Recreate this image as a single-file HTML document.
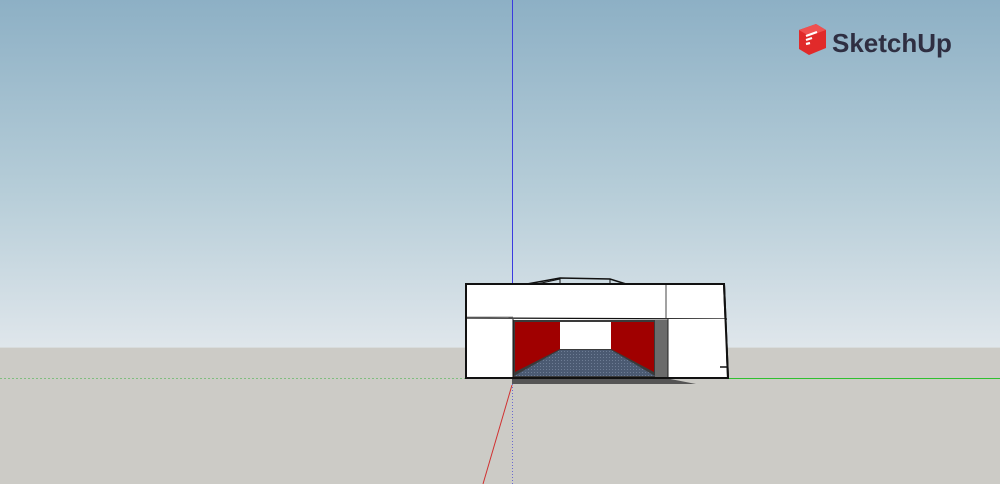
<!DOCTYPE html>
<html><head><meta charset="utf-8"><style>
html,body{margin:0;padding:0;width:1000px;height:484px;overflow:hidden}
</style></head><body>
<svg width="1000" height="484" viewBox="0 0 1000 484" xmlns="http://www.w3.org/2000/svg">
<defs>
<linearGradient id="sky" x1="0" y1="0" x2="0" y2="1">
<stop offset="0" stop-color="#8db0c5"/>
<stop offset="0.55" stop-color="#b6cdd8"/>
<stop offset="1" stop-color="#dfe6eb"/>
</linearGradient>
<pattern id="dots" width="3" height="3" patternUnits="userSpaceOnUse">
<rect width="3" height="3" fill="#4b5a72"/><rect width="1" height="1" fill="#6d7c94"/>
</pattern>
</defs>
<rect x="0" y="0" width="1000" height="347" fill="url(#sky)"/>
<rect x="0" y="347" width="1000" height="137" fill="#cccbc6"/>
<line x1="0" y1="347.5" x2="1000" y2="347.5" stroke="#d8dcdc" stroke-width="1"/>
<line x1="512.5" y1="0" x2="512.5" y2="284" stroke="#3a3ae0" stroke-width="1"/>
<line x1="512.5" y1="384" x2="512.5" y2="484" stroke="#6a6ad0" stroke-width="1" stroke-dasharray="1,2"/>
<line x1="0" y1="378.5" x2="466" y2="378.5" stroke="#7fbf7f" stroke-width="1" stroke-dasharray="2,2"/>
<line x1="728" y1="378.5" x2="1000" y2="378.5" stroke="#2fc02f" stroke-width="1"/>
<line x1="512" y1="385" x2="483" y2="484" stroke="#d03030" stroke-width="1"/>
<polygon points="512,377 660,377 696,384 512,384" fill="#555"/>
<polyline points="527,284 560,278 610,279 626,284" fill="none" stroke="#111" stroke-width="1.5"/>
<line x1="560" y1="278" x2="560" y2="284" stroke="#111"/>
<line x1="610" y1="279" x2="610" y2="284" stroke="#111"/>
<line x1="537" y1="284" x2="560" y2="279" stroke="#111"/>
<polygon points="466,284 724,284 728,378 466,378" fill="#fff" stroke="#111" stroke-width="2"/>
<line x1="466" y1="318" x2="727" y2="319" stroke="#111" stroke-width="1.2"/>
<line x1="666" y1="284" x2="666" y2="318" stroke="#444" stroke-width="1"/>
<line x1="466" y1="317" x2="513" y2="317" stroke="#999" stroke-width="1"/>
<rect x="513" y="320" width="155" height="58" fill="#3a3a3a"/>
<rect x="655" y="320" width="13" height="58" fill="#6b6b6b"/>
<polygon points="515,322 560,322 560,349 515,372" fill="#a00000"/>
<polygon points="611,322 654,322 654,372 611,349" fill="#a00000"/>
<rect x="560" y="322" width="51" height="27" fill="#fff"/>
<polygon points="560,350 611,350 655,376 514,376" fill="url(#dots)"/>
<rect x="668" y="319" width="58" height="58" fill="#fff"/>
<line x1="668" y1="319" x2="668" y2="378" stroke="#222" stroke-width="1"/>
<line x1="720" y1="367" x2="727" y2="367" stroke="#111" stroke-width="1.5"/>
<line x1="513" y1="319" x2="513" y2="378" stroke="#111" stroke-width="1"/>
<polygon points="466,284 724,284 728,378 466,378" fill="none" stroke="#111" stroke-width="2"/>
<g transform="translate(796,24)">
<polygon points="3,6 20,0 30,6 30,24 13,31 3,25" fill="#e12a2a"/>
<polygon points="3,6 20,0 30,6 13,12" fill="#f05050"/>
<path d="M10,12 L21,8 M10,16 L16,14 M10,20 L14,19" stroke="#fff" stroke-width="2.2" fill="none"/>
</g>
<text x="832" y="52" font-family="Liberation Sans, sans-serif" font-weight="bold" font-size="26" fill="#2f2f42">SketchUp</text>
</svg>
</body></html>
